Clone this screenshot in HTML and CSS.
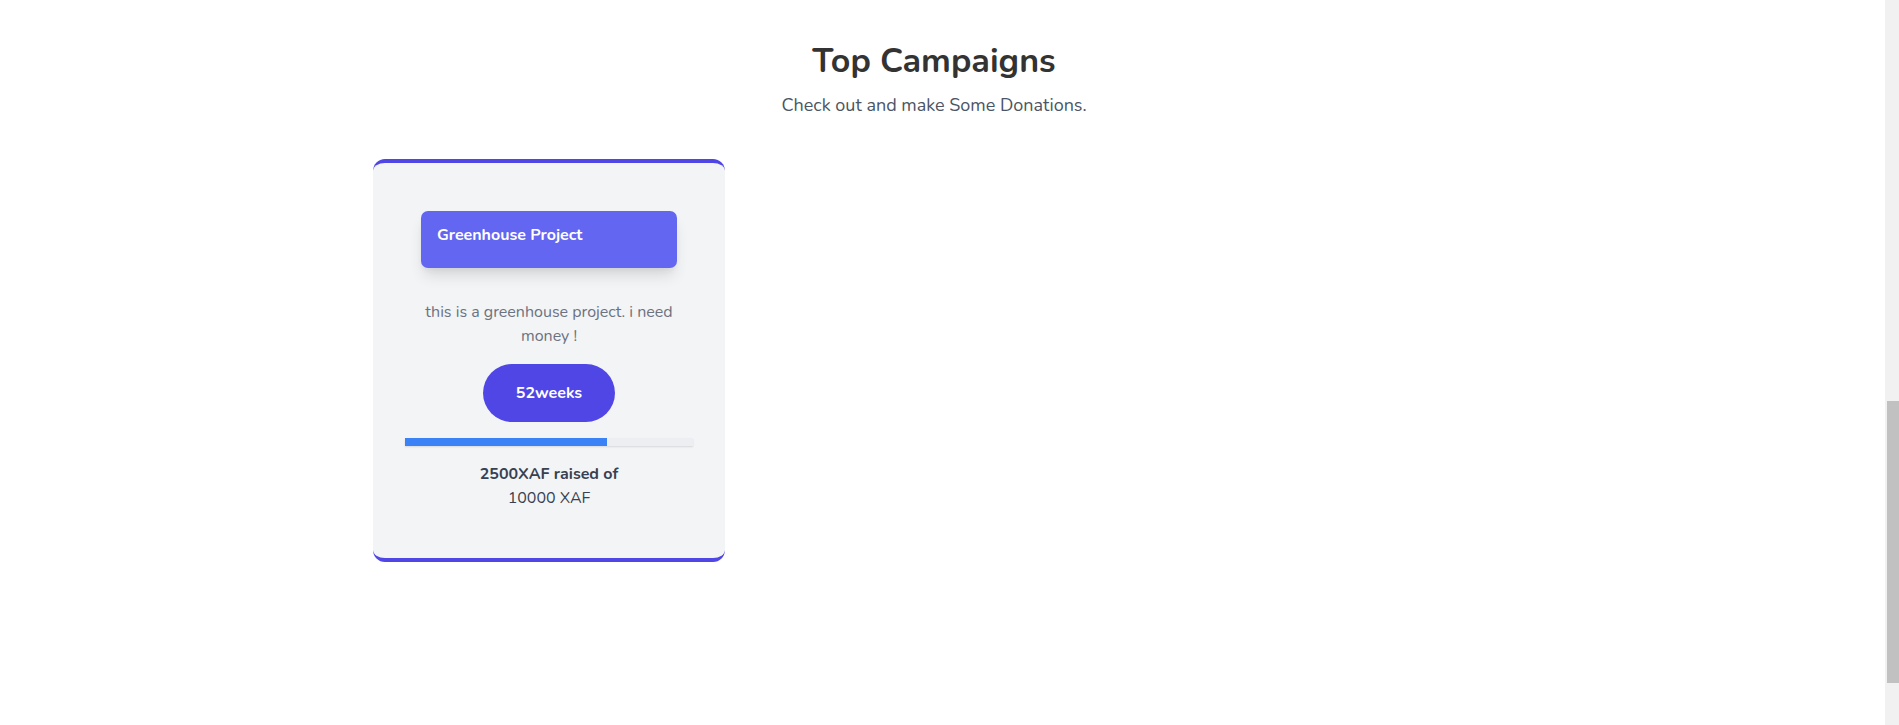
FILE: index.html
```html
<!DOCTYPE html>
<html lang="en">
<head>
<meta charset="utf-8">
<title>Top Campaigns</title>
<link rel="stylesheet" href="styles.css">
</head>
<body>
<main class="page">
  <section class="campaigns">
    <header class="section-head">
      <h2 class="section-title">Top Campaigns</h2>
      <p class="section-sub">Check out and make Some Donations.</p>
    </header>
    <div class="grid">
      <article class="card">
        <div class="card-head">Greenhouse Project</div>
        <p class="card-desc">this is a greenhouse project. i need money !</p>
        <div class="card-action"><span class="pill">52weeks</span></div>
        <div class="progress"><div class="progress-fill" style="width:70%"></div></div>
        <p class="raised"><strong>2500XAF raised of</strong><br>10000 XAF</p>
      </article>
    </div>
  </section>
</main>
<aside class="scrollbar"><div class="thumb"></div></aside>
</body>
</html>
```
FILE: styles.css
```css
html, body {
  margin: 0;
  height: 100%;
  overflow: hidden;
}
body {
  display: flex;
  background: #ffffff;
  font-family: "Nunito", "Open Sans", "Noto Sans", sans-serif;
  color: #374151;
}
.page {
  flex: 1;
  padding-right: 17px;
}
.campaigns {
  display: flex;
  flex-direction: column;
  align-items: center;
  padding-top: 41px;
}
.section-head {
  text-align: center;
}
.section-title {
  margin: 0;
  font-size: 34px;
  line-height: 40px;
  font-weight: 700;
  color: #333333;
}
.section-sub {
  margin: 10px 0 0;
  font-size: 18px;
  line-height: 28px;
  color: #4b5563;
}
.grid {
  margin-top: 40px;
  display: grid;
  grid-template-columns: repeat(3, 352px);
  gap: 33px;
}
.card {
  box-sizing: border-box;
  height: 403px;
  background: #f3f4f6;
  border-top: 4px solid #4f46e5;
  border-bottom: 4px solid #4f46e5;
  border-radius: 12px;
  padding: 48px 32px 32px;
  display: flex;
  flex-direction: column;
  align-items: center;
  text-align: center;
}
.card-head {
  box-sizing: border-box;
  width: 256px;
  height: 57px;
  padding: 12px 16px;
  background: #6366f1;
  color: #ffffff;
  font-weight: 700;
  font-size: 16px;
  line-height: 24px;
  text-align: left;
  border-radius: 7px;
  box-shadow: 0 10px 15px -3px rgba(0,0,0,0.12), 0 4px 6px -2px rgba(0,0,0,0.06);
}
.card-desc {
  margin: 32px 0 0;
  width: 256px;
  font-size: 16px;
  line-height: 24px;
  color: #6b7280;
}
.card-action {
  margin-top: 16px;
}
.pill {
  display: inline-flex;
  align-items: center;
  justify-content: center;
  width: 132px;
  height: 58px;
  border-radius: 29px;
  background: #4f46e5;
  color: #ffffff;
  font-weight: 700;
  font-size: 16px;
}
.progress {
  margin-top: 16px;
  width: 288px;
  height: 8px;
  background: #eceef1;
  box-shadow: 0 1px 2px rgba(0,0,0,0.12);
}
.progress-fill {
  height: 100%;
  background: #3b82f6;
}
.raised {
  margin: 16px 0 0;
  font-size: 16px;
  line-height: 24px;
  color: #374151;
}
.raised strong {
  font-weight: 700;
}
.scrollbar {
  flex: 0 0 14px;
  background: #f1f1f1;
  padding-top: 401px;
}
.thumb {
  margin-left: 2px;
  height: 282px;
  background: #c1c1c1;
}
```
